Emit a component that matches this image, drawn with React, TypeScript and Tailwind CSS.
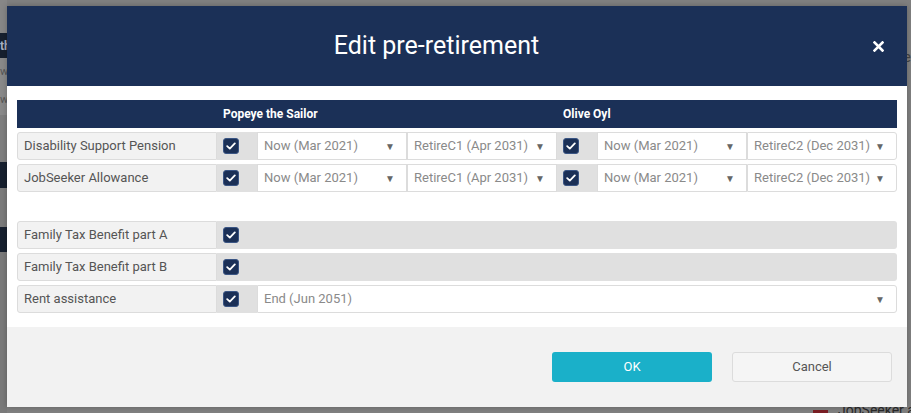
import React from "react";

const font = { fontFamily: "Roboto, 'Liberation Sans', sans-serif" };

function Check() {
  return (
    <span className="flex h-4 w-4 items-center justify-center rounded-[3px] border border-[#3a5584] bg-[#1b3057]">
      <svg width="10" height="8" viewBox="0 0 10 8">
        <path d="M1.2 4.2 L3.8 6.6 L8.8 1.4" fill="none" stroke="#fff" strokeWidth="1.8" strokeLinecap="round" strokeLinejoin="round" />
      </svg>
    </span>
  );
}

function Select({ label, last }: { label: string; last?: boolean }) {
  return (
    <div className={`flex h-full flex-1 items-center justify-between border border-[#dcdcdc] bg-white pl-[6px] pr-[11px] text-[13px] text-[#8a8a8a] ${last ? "rounded-r-[3px]" : ""}`}>
      <span>{label}</span>
      <span className="text-[10px] text-[#666]">▼</span>
    </div>
  );
}

function Label({ text }: { text: string }) {
  return (
    <div className="flex h-full w-[200px] shrink-0 items-center rounded-l-[3px] border border-[#dcdcdc] bg-[#f2f2f2] pl-[6px] text-[13px] text-[#555]">
      {text}
    </div>
  );
}

function CheckCell({ grow, last }: { grow?: boolean; last?: boolean }) {
  return (
    <div className={`flex h-full items-center bg-[#e0e0e0] pl-[6px] ${grow ? "flex-1" : "w-[40px] shrink-0"} ${last ? "rounded-r-[3px]" : ""}`}>
      <Check />
    </div>
  );
}

const pairs = [
  ["Disability Support Pension"],
  ["JobSeeker Allowance"],
];

export default function App() {
  return (
    <div className="relative h-[413px] w-[911px] overflow-hidden bg-[#808080]" style={font}>
      {/* page behind the overlay */}
      <div className="flex h-full w-[7px] flex-col">
        <div className="h-[33px] bg-[#878787]" />
        <div className="flex h-[25px] items-center overflow-hidden bg-[#17202f] text-[12px] font-bold text-[#a9b0c3]">th</div>
        <div className="h-[57px] bg-[#8a8a8a] text-[11px] leading-[28px] text-[#555]">w<br />w</div>
        <div className="h-[47px] bg-[#7e7e7e]" />
        <div className="h-[26px] bg-[#17202f]" />
        <div className="h-[39px] bg-[#7b7b7b]" />
        <div className="h-[25px] bg-[#17202f]" />
        <div className="flex-1 bg-[#7a7a7a]" />
      </div>
      <div className="absolute right-0 top-[50px] text-[14px] leading-none text-[#444]">e</div>
      <div className="absolute left-[813px] top-[403px] flex items-start gap-[10px]">
        <span className="mt-[7px] h-[6px] w-[15px] bg-[#7a1e24]" />
        <span className="whitespace-nowrap text-[14px] leading-none text-[#2a2a2a]">JobSeeker al</span>
      </div>

      {/* dialog */}
      <div className="absolute left-[7px] top-[6px] flex h-[401px] w-[900px] flex-col bg-white shadow-[0_0_6px_rgba(0,0,0,0.25)]">
        <div className="flex h-[80px] shrink-0 items-center bg-[#1b3057]">
          <span className="flex-1 text-center text-[25px] text-white">Edit pre-retirement</span>
          <button className="mr-[21px] ml-[4px] flex h-4 w-4 items-center justify-center">
            <svg width="11" height="11" viewBox="0 0 11 11">
              <path d="M1.5 1.5 L9.5 9.5 M9.5 1.5 L1.5 9.5" stroke="#fff" strokeWidth="2.6" strokeLinecap="square" />
            </svg>
          </button>
        </div>

        <div className="flex flex-1 flex-col px-[10px] pt-[14px]">
          <div className="flex h-[28px] items-center bg-[#1b3057] text-[12px] font-bold text-white">
            <div className="w-[206px] shrink-0" />
            <div className="w-[340px] shrink-0">Popeye the Sailor</div>
            <div>Olive Oyl</div>
          </div>

          <div className="mt-[4px] flex flex-col gap-[4px]">
            {pairs.map(([name]) => (
              <div key={name} className="flex h-[28px]">
                <Label text={name} />
                <CheckCell />
                <Select label="Now (Mar 2021)" />
                <Select label="RetireC1 (Apr 2031)" />
                <CheckCell />
                <Select label="Now (Mar 2021)" />
                <Select label="RetireC2 (Dec 2031)" last />
              </div>
            ))}
          </div>

          <div className="mt-[29px] flex flex-col gap-[4px]">
            <div className="flex h-[28px]">
              <Label text="Family Tax Benefit part A" />
              <CheckCell grow last />
            </div>
            <div className="flex h-[28px]">
              <Label text="Family Tax Benefit part B" />
              <CheckCell grow last />
            </div>
            <div className="flex h-[28px]">
              <Label text="Rent assistance" />
              <CheckCell />
              <Select label="End (Jun 2051)" last />
            </div>
          </div>
        </div>

        <div className="flex h-[80px] shrink-0 items-start justify-end gap-[20px] bg-[#f2f2f2] pr-[15px] pt-[25px]">
          <button className="h-[30px] w-[160px] rounded-[3px] bg-[#1ab0c9] text-[13px] text-white">OK</button>
          <button className="h-[30px] w-[160px] rounded-[3px] border border-[#dcdcdc] bg-[#f5f5f5] text-[13px] text-[#555]">Cancel</button>
        </div>
      </div>
    </div>
  );
}
